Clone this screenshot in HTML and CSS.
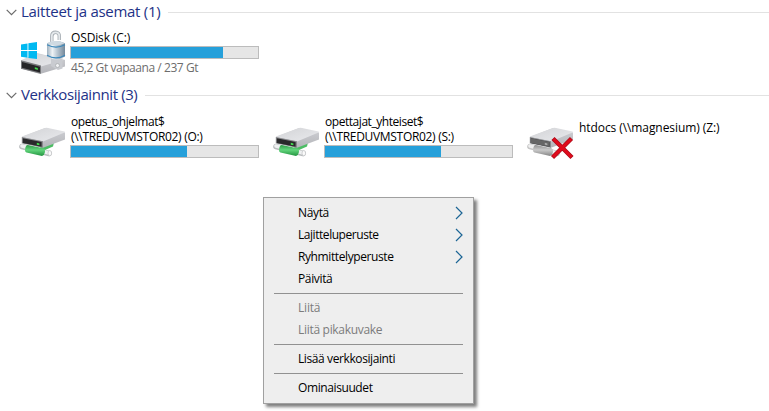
FILE: index.html
```html
<!DOCTYPE html>
<html lang="fi">
<head>
<meta charset="utf-8">
<title>Tämä tietokone</title>
<link rel="stylesheet" href="styles.css">
</head>
<body>
<svg class="defs" width="0" height="0">
  <defs>
    <linearGradient id="top" x1="0" y1="0" x2="1" y2="1"><stop offset="0" stop-color="#d2d3d6"/><stop offset="1" stop-color="#e9eaed"/></linearGradient>
    <linearGradient id="side" x1="0" y1="0" x2="0" y2="1"><stop offset="0" stop-color="#d0d1d5"/><stop offset="1" stop-color="#b4b5ba"/></linearGradient>
    <linearGradient id="green" x1="0" y1="0" x2="0" y2="1"><stop offset="0" stop-color="#2f9e49"/><stop offset=".45" stop-color="#62d57c"/><stop offset="1" stop-color="#239440"/></linearGradient>
    <linearGradient id="grey" x1="0" y1="0" x2="0" y2="1"><stop offset="0" stop-color="#909090"/><stop offset=".45" stop-color="#c9c9c9"/><stop offset="1" stop-color="#858585"/></linearGradient>
    <linearGradient id="lock" x1="0" y1="0" x2="1" y2="0"><stop offset="0" stop-color="#9eb0bf"/><stop offset=".3" stop-color="#eef3f6"/><stop offset=".55" stop-color="#bccad5"/><stop offset="1" stop-color="#74889a"/></linearGradient>
    <g id="drive">
      <path d="M4 10 27 1 47 5.500V12.500L25 20.700 4 16Z" fill="url(#side)"/>
      <path d="M4 10.200Q3.500 9.700 4.500 9.300L27 1Q28.500 .5 30 .9L46.500 4.600Q47.500 5 46.500 5.600L25 14.500Z" fill="url(#top)"/>
      <path d="M3.800 10 25 14.300V20.700L3.800 16.300Z" fill="#88898c"/>
      <path d="M4.800 11.200 23.600 15.100V19.800L4.800 15.900Z" fill="#29292b"/>
    </g>
  </defs>
</svg>

<main>
  <section>
    <h2 class="head"><svg class="chev" viewBox="0 0 11 7"><path d="M.7 .9 5.500 5.700 10.300 .9"/></svg><span class="h1">Laitteet ja asemat (1)</span><i class="rule"></i></h2>
    <div class="tiles first">
      <article class="tile">
        <svg class="icon" viewBox="18 27 50 50">
          <path d="M21 61.500 37 53 65 60 65 66.500 40 74 21 68.500Z" fill="url(#side)"/>
          <path d="M21 60.300 36 53.500 65 59.500 41 66.500Z" fill="url(#top)"/>
          <path d="M21 60.300 41 65.500 41 73.700 21 68.700Z" fill="#77787b"/>
          <path d="M22 62 40 66.700 40 72.500 22 67.800Z" fill="#252527"/>
          <path d="M34.800 67.300l3 .8v1.800l-3-.8z" fill="#42dd4c"/>
          <path d="M21 44.400 27.500 43.400V50H21ZM28.400 43.200 37 42V50H28.400ZM21 51H27.500V57.700L21 56.700ZM28.400 51H37V59L28.400 57.900Z" fill="#00b9f1"/>
          <path d="M51.800 45V36.500Q51.800 32.300 55.600 32.300T59.300 36.500V40" fill="none" stroke="#a4abb1" stroke-width="3.400"/>
          <path d="M51.800 45V36.500Q51.800 32.300 55.600 32.300T59.300 36.500V40" fill="none" stroke="#e4e8eb" stroke-width="1.800"/>
          <path d="M51 58Q57 61 62.500 58V68.500L58 70 51 66Z" fill="#c9cbd0"/><circle cx="57.500" cy="65.500" r="2" fill="#f0f1f3" stroke="#a5a7ab" stroke-width=".7"/>
          <path d="M47 43.200Q55.500 39 65 43.200V56.500Q56 62 47 56.500Z" fill="url(#lock)"/>
          <path d="M47 43.200Q55.500 39 65 43.200Q56 47.500 47 43.200Z" fill="#cfdae2"/>
          <path d="M47 44.800Q56 49.500 65 44.800M47 55.300Q56 60.500 65 55.300" fill="none" stroke="#3d89bb" stroke-width="1.200"/>
        </svg>
        <div class="info">
          <p class="name n1">OSDisk (C:)</p>
          <div class="bar"><b style="width:152px"></b></div>
          <p class="free">45,2 Gt vapaana / 237 Gt</p>
        </div>
      </article>
    </div>
  </section>

  <section>
    <h2 class="head"><svg class="chev" viewBox="0 0 11 7"><path d="M.7 .9 5.500 5.700 10.300 .9"/></svg><span class="h2">Verkkosijainnit (3)</span><i class="rule"></i></h2>
    <div class="tiles second">
      <article class="tile">
        <svg class="icon net" viewBox="0 0 50 32">
          <path d="M4 19.500 31 26.500" stroke="#b9bcbe" stroke-width="5.600" stroke-linecap="round"/>
          <path d="M4 19 31 26" stroke="#eff1f2" stroke-width="3.600" stroke-linecap="round"/>
          <path d="M18 18 36 15.500 35 19.500 27 23Z" fill="#4cbd64"/>
          <use href="#drive"/>
          <path d="M18.800 15.800l2.600.6v1.900l-2.600-.6z" fill="#42dd4c"/>
          <path d="M9.500 18 25.500 21.200Q27.500 22 27 25T24 29L8.500 25.500Q6.500 25 7.200 21.500T9.500 18Z" fill="url(#green)"/>
          <ellipse cx="31.800" cy="26.200" rx="1.800" ry="2.700" fill="#fafafa" stroke="#c3c5c7" stroke-width=".8"/>
        </svg>
        <div class="info">
          <p class="name n2">opetus_ohjelmat$</p>
          <p class="name n3">(\\TREDUVMSTOR02) (O:)</p>
          <div class="bar"><b style="width:116px"></b></div>
        </div>
      </article>
      <article class="tile">
        <svg class="icon net" viewBox="0 0 50 32">
          <path d="M4 19.500 31 26.500" stroke="#b9bcbe" stroke-width="5.600" stroke-linecap="round"/>
          <path d="M4 19 31 26" stroke="#eff1f2" stroke-width="3.600" stroke-linecap="round"/>
          <path d="M18 18 36 15.500 35 19.500 27 23Z" fill="#4cbd64"/>
          <use href="#drive"/>
          <path d="M18.800 15.800l2.600.6v1.900l-2.600-.6z" fill="#42dd4c"/>
          <path d="M9.500 18 25.500 21.200Q27.500 22 27 25T24 29L8.500 25.500Q6.500 25 7.200 21.500T9.500 18Z" fill="url(#green)"/>
          <ellipse cx="31.800" cy="26.200" rx="1.800" ry="2.700" fill="#fafafa" stroke="#c3c5c7" stroke-width=".8"/>
        </svg>
        <div class="info">
          <p class="name n4">opettajat_yhteiset$</p>
          <p class="name n5">(\\TREDUVMSTOR02) (S:)</p>
          <div class="bar"><b style="width:116px"></b></div>
        </div>
      </article>
      <article class="tile">
        <svg class="icon net" viewBox="0 0 50 32">
          <path d="M4 19.500 31 26.500" stroke="#c4c4c4" stroke-width="5.600" stroke-linecap="round"/>
          <path d="M4 19 31 26" stroke="#efefef" stroke-width="3.600" stroke-linecap="round"/>
          <use href="#drive"/>
          <path d="M4.800 11.200 23.600 15.100V19.800L4.800 15.900Z" fill="#666"/><path d="M18.800 15.800l2.600.6v1.900l-2.600-.6z" fill="#aaa"/>
          <path d="M9.500 18 25.500 21.200Q27.500 22 27 25T24 29L8.500 25.500Q6.500 25 7.200 21.500T9.500 18Z" fill="url(#grey)"/>
          <path d="M27 11.500 46 30.500M45.500 11.500 26.500 30.500" stroke="#a90d1a" stroke-width="4.400"/>
          <path d="M27.500 12 45.500 30M45 12 27 30" stroke="#e00b1c" stroke-width="3"/>
        </svg>
        <div class="info single"><p class="name n6">htdocs (\\magnesium) (Z:)</p></div>
      </article>
    </div>
  </section>
</main>

<ul class="menu">
  <li><span class="m1">Näytä</span><svg viewBox="0 0 8 14"><path d="M1 1 7 7 1 13"/></svg></li>
  <li><span class="m2">Lajitteluperuste</span><svg viewBox="0 0 8 14"><path d="M1 1 7 7 1 13"/></svg></li>
  <li><span class="m3">Ryhmittelyperuste</span><svg viewBox="0 0 8 14"><path d="M1 1 7 7 1 13"/></svg></li>
  <li><span class="m4">Päivitä</span></li>
  <li class="sep"></li>
  <li class="off"><span class="m5">Liitä</span></li>
  <li class="off"><span class="m6">Liitä pikakuvake</span></li>
  <li class="sep"></li>
  <li><span class="m7">Lisää verkkosijainti</span></li>
  <li class="sep"></li>
  <li><span class="m8">Ominaisuudet</span></li>
</ul>
</body>
</html>
```
FILE: styles.css
```css
* { box-sizing: border-box; margin: 0; padding: 0; }
body {
  width: 769px; height: 411px; overflow: hidden; background: #fff; color: #000;
  font: 12px/15px "Open Sans", "Noto Sans", sans-serif;
}
.defs { position: absolute; }
.head {
  display: flex; align-items: center; height: 20px; padding-left: 6px;
  font-size: 15px; font-weight: 400; line-height: 20px; color: #1e3287; white-space: nowrap;
}
.head span { margin-top: -2px; }
.h1 { width: 139px; letter-spacing: -.28px; }
.h2 { width: 116px; letter-spacing: -.4px; }
.chev { width: 11px; height: 7px; margin-right: 4px; fill: none; stroke: #6a6a6a; stroke-width: 1.2; }
.rule { flex: 1; height: 1px; margin-left: 8px; background: #e2e2e2; }
main { padding-top: 2px; }
.tiles { display: flex; }
.first { height: 63px; padding-top: 5px; }
.second { padding-top: 9px; }
.tile { display: flex; flex: none; width: 254px; padding-left: 18px; }
.icon { flex: none; width: 50px; height: 50px; margin-right: 2px; }
.net { width: 50px; height: 32px; margin-top: 13px; overflow: visible; }
.info { flex: none; width: 189px; white-space: nowrap; }
.first .info { padding-top: 3px; }
.name { height: 15px; padding-left: 1px; }
.n1 { letter-spacing: -.14px; }
.n2 { letter-spacing: -.42px; }
.n4 { letter-spacing: -.45px; }
.n3, .n5 { letter-spacing: -.31px; }
.n6 { letter-spacing: -.08px; }
.bar { height: 13px; border: 1px solid #bcbcbc; background: #e6e6e6; }
.bar b { display: block; height: 11px; background: #26a0da; }
.second .bar { margin-top: 1px; }
.second .single { padding-top: 6px; }
.first .bar { margin-top: 1px; }
.free { margin-top: 1px; padding-left: 1px; letter-spacing: -.44px; color: #6d6d6d; }
.menu {
  position: absolute; left: 263px; top: 197px; width: 211px; height: 207px;
  padding: 4px 10px; list-style: none; white-space: nowrap;
  background: #eee; border: 1px solid #a0a0a0; box-shadow: 3px 3px 3px rgba(0,0,0,.5);
}
.menu li { display: flex; align-items: center; justify-content: space-between; height: 22px; padding-left: 24px; }
.menu span { margin-top: -1px; }
.m1, .m4 { letter-spacing: -.35px; }
.m2 { letter-spacing: -.45px; }
.m3, .m7, .m8 { letter-spacing: -.4px; }
.m5 { letter-spacing: -.2px; }
.m6 { letter-spacing: -.3px; }
.menu svg { width: 8px; height: 14px; fill: none; stroke: #1c6595; stroke-width: 1.2; }
.menu .sep { height: 7px; padding: 0; background: linear-gradient(#919191, #919191) 0 3px / 100% 1px no-repeat; }
.menu .off { color: #7c7c7c; }
```
